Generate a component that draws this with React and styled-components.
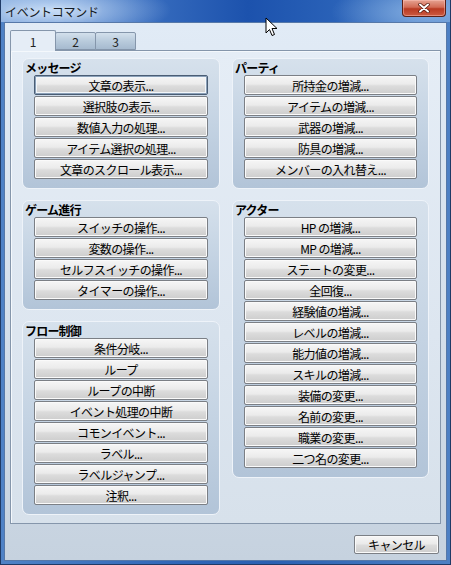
import React from "react";
import styled, { createGlobalStyle } from "styled-components";

//Global page reset
const GlobalStyle = createGlobalStyle`
  html, body {
    margin: 0;
    padding: 0;
    background: #ffffff;
  }
  * {
    box-sizing: border-box;
  }
`;

const FONT = `"MS UI Gothic", "Noto Sans CJK JP", "Noto Sans", sans-serif`;

const groupsLeft = [
  {
    title: "メッセージ",
    items: ["文章の表示...", "選択肢の表示...", "数値入力の処理...", "アイテム選択の処理...", "文章のスクロール表示..."],
    focused: 0,
  },
  {
    title: "ゲーム進行",
    items: ["スイッチの操作...", "変数の操作...", "セルフスイッチの操作...", "タイマーの操作..."],
  },
  {
    title: "フロー制御",
    items: ["条件分岐...", "ループ", "ループの中断", "イベント処理の中断", "コモンイベント...", "ラベル...", "ラベルジャンプ...", "注釈..."],
  },
];

const groupsRight = [
  {
    title: "パーティ",
    items: ["所持金の増減...", "アイテムの増減...", "武器の増減...", "防具の増減...", "メンバーの入れ替え..."],
  },
  {
    title: "アクター",
    items: [
      "HP の増減...",
      "MP の増減...",
      "ステートの変更...",
      "全回復...",
      "経験値の増減...",
      "レベルの増減...",
      "能力値の増減...",
      "スキルの増減...",
      "装備の変更...",
      "名前の変更...",
      "職業の変更...",
      "二つ名の変更...",
    ],
  },
];

function Group({ group }) {
  return (
    <GroupBox>
      <GroupTitle>{group.title}</GroupTitle>
      <ButtonList>
        {group.items.map((label, i) => (
          <CmdButton key={label} $focused={group.focused === i}>
            {label}
          </CmdButton>
        ))}
      </ButtonList>
    </GroupBox>
  );
}

export default function App() {
  return (
    <>
      <GlobalStyle />
      <Window>
        <TitleBar>
          <TitleText>イベントコマンド</TitleText>
          <CloseButton>
            <svg width="12" height="10" viewBox="0 0 12 10">
              <path d="M2 1.5 L10 8.5 M10 1.5 L2 8.5" stroke="#4a1208" strokeWidth="3.4" strokeLinecap="round" />
              <path d="M2 1.5 L10 8.5 M10 1.5 L2 8.5" stroke="#ffffff" strokeWidth="2" strokeLinecap="round" />
            </svg>
          </CloseButton>
          <Cursor width="13" height="20" viewBox="0 0 13 20">
            <path
              d="M1 1 L1 16 L4.5 12.5 L7 18.5 L9.5 17.5 L7 11.5 L12 11.5 Z"
              fill="#ffffff"
              stroke="#000000"
              strokeWidth="1"
              strokeLinejoin="round"
            />
          </Cursor>
        </TitleBar>
        <Client>
          <TabStrip>
            <Tab $active>1</Tab>
            <Tab>2</Tab>
            <Tab>3</Tab>
          </TabStrip>
          <Panel>
            <Column $width={198}>
              {groupsLeft.map((g) => (
                <Group key={g.title} group={g} />
              ))}
            </Column>
            <Column $width={197}>
              {groupsRight.map((g) => (
                <Group key={g.title} group={g} />
              ))}
            </Column>
          </Panel>
          <Footer>
            <CancelButton>キャンセル</CancelButton>
          </Footer>
        </Client>
      </Window>
    </>
  );
}

//CSS
const Window = styled.div`
  position: relative;
  width: 451px;
  height: 565px;
  display: flex;
  flex-direction: column;
  padding: 0 3px 3px 3px;
  border: 1px solid #1f3a66;
  border-top: none;
  background: linear-gradient(90deg, #4f82c6 0%, #2f66b8 40%, #2a60b2 60%, #4d80c4 100%);
  font-family: ${FONT};
  overflow: hidden;
`;

const TitleBar = styled.div`
  position: relative;
  height: 22px;
  flex: none;
  margin: 0 -3px;
  display: flex;
  align-items: center;
  padding-left: 4px;
  background:
    radial-gradient(ellipse 120px 30px at 50px 10px, rgba(200, 222, 248, 0.95), rgba(200, 222, 248, 0) 100%),
    radial-gradient(ellipse 90px 30px at 420px 12px, rgba(150, 190, 235, 0.7), rgba(150, 190, 235, 0) 100%),
    linear-gradient(90deg, #6f9ad4 0%, #3a6fc0 30%, #1c52ad 55%, #2a62b8 75%, #5b8ccc 100%);
`;

const TitleText = styled.span`
  font-size: 12px;
  color: #151a22;
  letter-spacing: -0.3px;
  text-shadow: 0 0 6px rgba(255, 255, 255, 0.9);
`;

const CloseButton = styled.div`
  position: absolute;
  top: 0;
  right: 4px;
  width: 44px;
  height: 17px;
  display: flex;
  align-items: center;
  justify-content: center;
  border: 1px solid #5c2016;
  border-top: none;
  border-radius: 0 0 4px 4px;
  background: linear-gradient(#e6a392 0%, #d26b55 45%, #b93a22 55%, #cc5a40 100%);
  box-shadow: inset 0 0 0 1px rgba(255, 200, 190, 0.45);
`;

const Cursor = styled.svg`
  position: absolute;
  left: 264px;
  top: 17px;
  z-index: 5;
`;

const Client = styled.div`
  flex: 1;
  display: flex;
  flex-direction: column;
  padding: 6px 5px 0 5px;
  border: 1px solid #5678a8;
  background: linear-gradient(#e1ebf6 0%, #d3deea 60%, #c6d2df 100%);
`;

const TabStrip = styled.div`
  display: flex;
  align-items: flex-end;
  height: 21px;
  position: relative;
  z-index: 1;
`;

const Tab = styled.div`
  height: ${(p) => (p.$active ? "21px" : "18px")};
  width: ${(p) => (p.$active ? "46px" : "41px")};
  margin-right: -1px;
  margin-bottom: ${(p) => (p.$active ? "-1px" : "0")};
  display: flex;
  align-items: center;
  justify-content: center;
  font-size: 12px;
  color: #222;
  border: 1px solid #8596ab;
  border-bottom: ${(p) => (p.$active ? "none" : "1px solid #8596ab")};
  border-radius: 2px 2px 0 0;
  background: ${(p) =>
    p.$active ? "#e5edf6" : "linear-gradient(#d3e0ec 0%, #b9cbdc 50%, #a6bacf 100%)"};
  padding-top: ${(p) => (p.$active ? "0" : "1px")};
`;

const Panel = styled.div`
  height: 474px;
  display: flex;
  gap: 12px;
  padding: 7px 11px;
  border: 1px solid #8596ab;
  box-shadow: inset 1px 1px 0 #f4f8fc;
  background: linear-gradient(#e5edf6 0%, #dde6f0 60%, #d7e1eb 100%);
`;

const Column = styled.div`
  width: ${(p) => p.$width}px;
  display: flex;
  flex-direction: column;
  gap: 11px;
`;

const GroupBox = styled.div`
  padding: 2px 11px 9px 11px;
  border-radius: 7px;
  border: 1px solid #eef3f9;
  background: linear-gradient(#d6e1ec 0%, #c4d3e3 50%, #b2c4d8 100%);
`;

const GroupTitle = styled.div`
  height: 14px;
  line-height: 13px;
  margin-left: -9px;
  font-size: 12px;
  font-weight: bold;
  color: #000;
  letter-spacing: -0.8px;
`;

const ButtonList = styled.div`
  display: flex;
  flex-direction: column;
  gap: 1px;
`;

const CmdButton = styled.div`
  height: 20px;
  display: flex;
  align-items: center;
  justify-content: center;
  font-size: 12px;
  color: #000;
  letter-spacing: -0.6px;
  white-space: nowrap;
  border: 1px solid ${(p) => (p.$focused ? "#4a5d74" : "#7b7f85")};
  border-radius: 2px;
  background: linear-gradient(#f6f6f6 0%, #ebebeb 45%, #dcdcdc 55%, #cdcdcd 100%);
  box-shadow: ${(p) =>
    p.$focused ? "inset 0 0 0 1px #8aa0b8, inset 0 0 0 2px #f2f6fa" : "inset 0 0 0 1px #fafafa"};
`;

const Footer = styled.div`
  display: flex;
  justify-content: flex-end;
  padding: 11px 2px 0 0;
`;

const CancelButton = styled(CmdButton)`
  width: 85px;
  height: 19px;
`;
